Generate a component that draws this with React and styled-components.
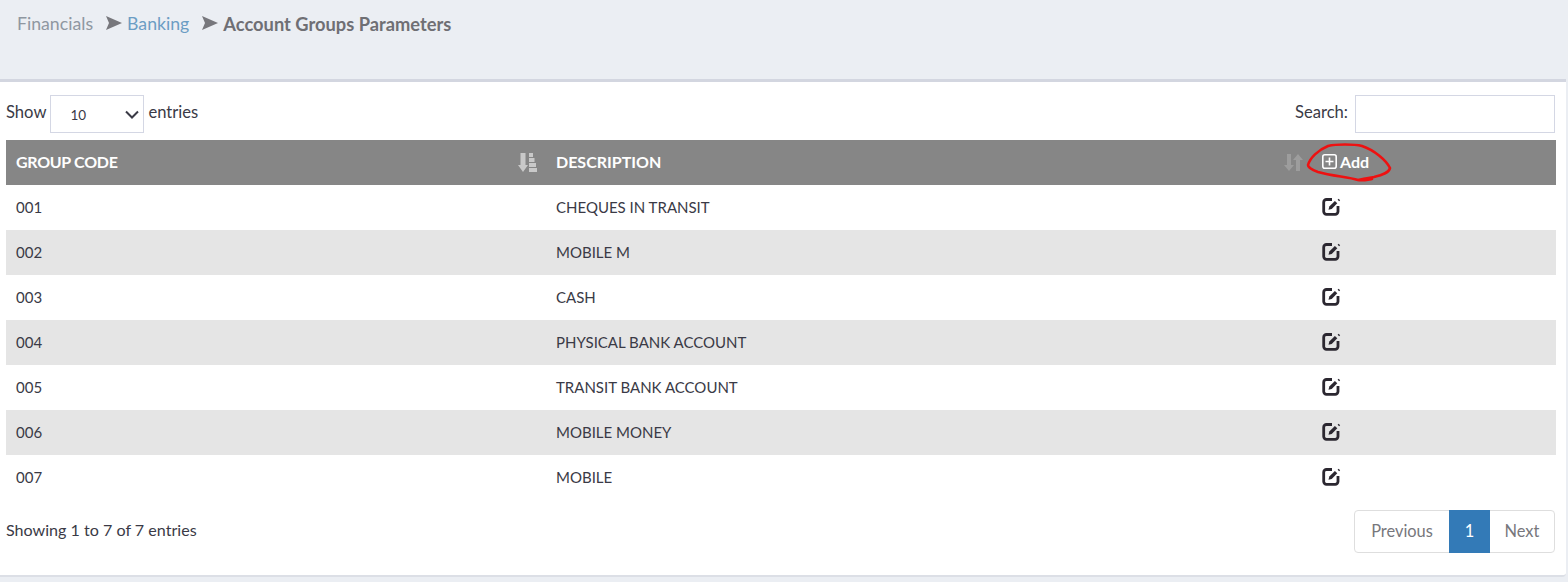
import React from 'react'
import styled, { createGlobalStyle } from 'styled-components'

const GlobalStyle = createGlobalStyle`
  html, body {
    margin: 0;
    padding: 0;
    background: #ebeef3;
    font-family: "Lato", "Open Sans", sans-serif;
    font-size: 16.4px;
    color: #3a3a46;
  }
`

const Page = styled.div`
  width: 1568px;
  height: 582px;
  overflow: hidden;
`

const Breadcrumbs = styled.div`
  height: 79px;
  padding: 14px 17px 0;
  box-sizing: border-box;
  display: flex;
  align-items: flex-start;
  line-height: 20px;
  font-size: 17.7px;
`

const Crumb = styled.span`
  color: ${p => p.$color};
  font-weight: ${p => (p.$bold ? 700 : 400)};
  font-size: ${p => (p.$bold ? '18.3px' : 'inherit')};
`

const Arrow = styled.svg`
  width: 16px;
  height: 14px;
  margin: 2px 5px 0 13px;
  fill: #77777c;
`

const Panel = styled.div`
  width: 1566px;
  height: 498px;
  box-sizing: border-box;
  background: #fff;
  border-top: 3px solid #d3d6e0;
  border-bottom: 2px solid #dcdfe6;
  border-radius: 0 0 4px 0;
  padding: 13px 10px 0 6px;
`

const TopBar = styled.div`
  display: flex;
  justify-content: space-between;
  align-items: center;
  height: 38px;
  padding-right: 1px;
  margin-bottom: 7px;
`

const Field = styled.label`
  display: flex;
  align-items: center;
  gap: 4px;
  line-height: 20px;
`

const FieldText = styled.span`
  margin-bottom: 4px;
  font-size: 16.6px;
`

const SelectWrap = styled.span`
  position: relative;
  display: block;
  width: 94px;
  height: 38px;
`

const Select = styled.select`
  appearance: none;
  width: 100%;
  height: 100%;
  box-sizing: border-box;
  border: 1px solid #d4d7e4;
  background: #fff;
  color: #3a3a46;
  font-family: inherit;
  font-size: 13.5px;
  padding: 2px 19px 0;
  border-radius: 0;
  outline: none;
`

const Chevron = styled.svg`
  position: absolute;
  right: 5px;
  top: 15px;
  width: 14px;
  height: 9px;
  fill: none;
  stroke: #3a3a46;
  stroke-width: 2;
  pointer-events: none;
`

const SearchInput = styled.input`
  width: 200px;
  height: 38px;
  box-sizing: border-box;
  border: 1px solid #d4d7e4;
  margin-left: 3px;
  outline: none;
`

const Table = styled.div`
  width: 1550px;
`

const Row = styled.div`
  display: grid;
  grid-template-columns: 540px 766px 244px;
  height: 45px;
  align-items: center;
  background: ${p => (p.$striped ? '#e5e5e5' : '#fff')};
  font-size: 15px;
`

const HeadRow = styled(Row)`
  background: #868686;
  color: #fff;
  font-weight: 700;
  font-size: 16px;
`

const Cell = styled.div`
  position: relative;
  display: flex;
  align-items: center;
  height: 100%;
  box-sizing: border-box;
  padding-left: ${p => p.$pad ?? 10}px;
  padding-bottom: ${p => p.$lift ?? 2}px;
  letter-spacing: ${p => (p.$tight ? '-0.3px' : 'normal')};
`

const SortIcon = styled.svg`
  position: absolute;
  right: 8px;
  top: 13px;
  width: 20px;
  height: 19px;
  fill: ${p => p.$color};
`

const AddButton = styled.span`
  display: flex;
  align-items: center;
  gap: 3px;
`

const AddIcon = styled.svg`
  width: 15px;
  height: 15px;
  margin-bottom: 1px;
  fill: none;
  stroke: #fff;
  stroke-width: 1.6;
`

const Scribble = styled.svg`
  position: absolute;
  left: -8px;
  top: 0;
  width: 90px;
  height: 45px;
  overflow: visible;
  fill: none;
  stroke: #ee1111;
  stroke-width: 2.6;
  stroke-linecap: round;
  stroke-linejoin: round;
`

const Footer = styled.div`
  display: flex;
  justify-content: space-between;
  align-items: flex-start;
  margin-top: 10px;
  padding-right: 1px;
`

const Info = styled.div`
  margin-top: 10px;
  line-height: 20px;
  font-size: 16.1px;
`

const Pager = styled.div`
  display: flex;
  height: 43px;
  box-sizing: border-box;
  border: 1px solid #dedede;
  border-radius: 4px;
`

const PageLink = styled.a`
  display: flex;
  align-items: center;
  justify-content: center;
  padding-bottom: 2px;
  box-sizing: border-box;
  width: ${p => p.$w}px;
  margin: ${p => (p.$active ? '-1px 0' : '0')};
  background: ${p => (p.$active ? '#337ab7' : 'transparent')};
  color: ${p => (p.$active ? '#fff' : '#77777c')};
`

const EditGlyph = () => (
  <svg width="19" height="19" viewBox="0 0 19 19">
    <path d="M10 2.500H4.500A2.800 2.800 0 0 0 1.700 5.300v9.200a2.800 2.800 0 0 0 2.800 2.800h8.700a2.800 2.800 0 0 0 2.800-2.800V9" fill="none" stroke="#2b2730" strokeWidth="2.800" />
    <path d="M6.500 12.700l.8-3.200 5.600-5.600 2.400 2.400-5.600 5.600z" fill="#2b2730" />
    <path d="M15.600 2.700l1-1 1.500 1.500-1 1z" fill="#2b2730" />
  </svg>
)

const rows = [
  ['001', 'CHEQUES IN TRANSIT'],
  ['002', 'MOBILE M'],
  ['003', 'CASH'],
  ['004', 'PHYSICAL BANK ACCOUNT'],
  ['005', 'TRANSIT BANK ACCOUNT'],
  ['006', 'MOBILE MONEY'],
  ['007', 'MOBILE'],
]

const App = () => (
  <Page>
    <GlobalStyle />
    <Breadcrumbs>
      <Crumb $color="#8f97a1">Financials</Crumb>
      <Arrow viewBox="0 0 16 14"><path d="M0 0l16 7-16 7 3-7z" /></Arrow>
      <Crumb $color="#6b9dc4">Banking</Crumb>
      <Arrow viewBox="0 0 16 14"><path d="M0 0l16 7-16 7 3-7z" /></Arrow>
      <Crumb $color="#6f6f74" $bold>Account Groups Parameters</Crumb>
    </Breadcrumbs>
    <Panel>
      <TopBar>
        <Field>
          <FieldText>Show</FieldText>
          <SelectWrap>
            <Select defaultValue="10">
              <option>10</option>
              <option>25</option>
              <option>50</option>
            </Select>
            <Chevron viewBox="0 0 14 9"><path d="M1 1.500l6 6 6-6" /></Chevron>
          </SelectWrap>
          <FieldText>entries</FieldText>
        </Field>
        <Field>
          <FieldText>Search:</FieldText>
          <SearchInput />
        </Field>
      </TopBar>
      <Table>
        <HeadRow>
          <Cell $tight>
            GROUP CODE
            <SortIcon $color="#c9c9c9" viewBox="0 0 20 19">
              <path d="M2.500 0h5v12H10l-5 7-5-7h2.500z" />
              <path d="M11 0h4v4h-4zM11 5h5.500v4H11zM11 10h7v4h-7zM11 15h8v4h-8z" />
            </SortIcon>
          </Cell>
          <Cell>
            DESCRIPTION
            <SortIcon $color="#9d9d9d" viewBox="0 0 20 19">
              <path d="M3 1h4v11h3l-5 6-5-6h3z" />
              <path d="M12 18h4V7h3l-5-6-5 6h3z" />
            </SortIcon>
          </Cell>
          <Cell>
            <AddButton>
              <AddIcon viewBox="0 0 15 15">
                <rect x=".8" y=".8" width="13.400" height="13.400" rx="2" />
                <path d="M7.500 3.500v8M3.500 7.500h8" />
              </AddIcon>
              Add
            </AddButton>
            <Scribble viewBox="0 0 90 45">
              <path d="M54 40C44 37 28 36 14 32 8 30 4 27 4 25 6 18 14 10 24 6 32 4 50 4 58 6c12 4 24 14 28 22-1 5-8 7-16 9-6 1-12 2-16 3 4 1 8 0 14-1" />
            </Scribble>
          </Cell>
        </HeadRow>
        {rows.map(([code, text], i) => (
          <Row key={code} $striped={i % 2 === 1}>
            <Cell>{code}</Cell>
            <Cell>{text}</Cell>
            <Cell $pad={10} $lift={3}><EditGlyph /></Cell>
          </Row>
        ))}
      </Table>
      <Footer>
        <Info>Showing 1 to 7 of 7 entries</Info>
        <Pager>
          <PageLink $w={94}>Previous</PageLink>
          <PageLink $w={41} $active>1</PageLink>
          <PageLink $w={64}>Next</PageLink>
        </Pager>
      </Footer>
    </Panel>
  </Page>
)

export default App
